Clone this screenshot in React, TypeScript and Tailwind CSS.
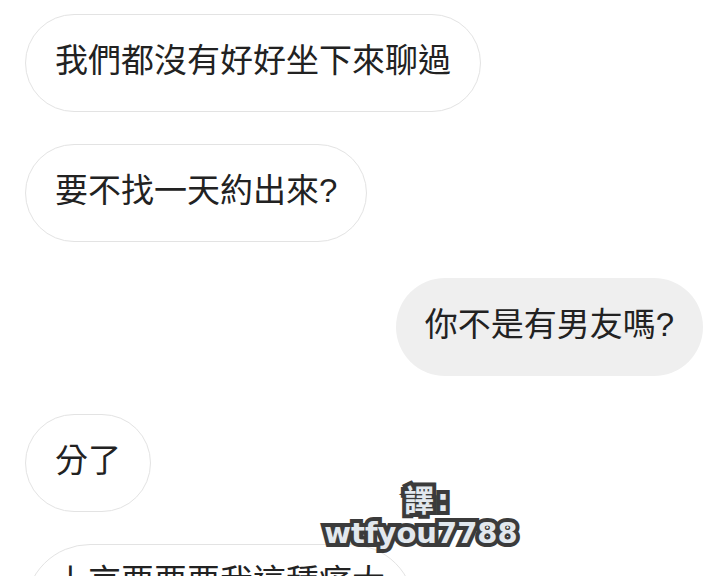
import React from 'react';

type Message = {
  id: number;
  text: string;
  mine: boolean;
};

const messages: Message[] = [
  { id: 1, text: '我們都沒有好好坐下來聊過', mine: false },
  { id: 2, text: '要不找一天約出來?', mine: false },
  { id: 3, text: '你不是有男友嗎?', mine: true },
  { id: 4, text: '分了', mine: false },
  { id: 5, text: '上京要要要我這種痛大', mine: false },
];

const ChatBubble: React.FC<{ message: Message; tall?: boolean }> = ({ message, tall }) => {
  return (
    <div className={`flex ${message.mine ? 'justify-end' : 'justify-start'}`}>
      <div
        className={`flex shrink-0 rounded-full px-[29px] text-[33px] leading-none text-[#222] ${
          tall ? 'h-[130px] items-start pt-[20px]' : 'h-[98px] items-center pb-[6px]'
        } ${message.mine ? 'bg-[#efefef]' : 'border border-[#e3e3e3] bg-white'}`}
      >
        {message.text}
      </div>
    </div>
  );
};

const App: React.FC = () => {
  return (
    <div
      className="relative h-[576px] w-[719px] overflow-hidden bg-white"
      style={{ fontFamily: '"Liberation Sans", "Noto Sans CJK TC", sans-serif' }}
    >
      {/* Chat thread */}
      <div className="flex flex-col pl-[25px] pr-[16px] pt-[14px]">
        <ChatBubble message={messages[0]} />
        <div className="mt-[32px]">
          <ChatBubble message={messages[1]} />
        </div>
        <div className="mt-[36px]">
          <ChatBubble message={messages[2]} />
        </div>
        <div className="mt-[38px]">
          <ChatBubble message={messages[3]} />
        </div>
        <div className="mt-[32px]">
          <ChatBubble message={messages[4]} tall />
        </div>
      </div>

      {/* Translator watermark */}
      <div
        className="absolute left-[318px] top-[486px] flex w-[206px] flex-col items-center font-bold leading-none text-[#e2e8ee] [-webkit-text-stroke:8px_#3b3b3b] [paint-order:stroke_fill]"
        style={{ fontFamily: '"DejaVu Sans", "Noto Sans CJK TC", sans-serif' }}
      >
        <span className="pl-[14px] text-[30px] tracking-[3px]">譯:</span>
        <span className="mt-[3px] text-[29px] tracking-[0px]">wtfyou7788</span>
      </div>
    </div>
  );
};

export default App;
